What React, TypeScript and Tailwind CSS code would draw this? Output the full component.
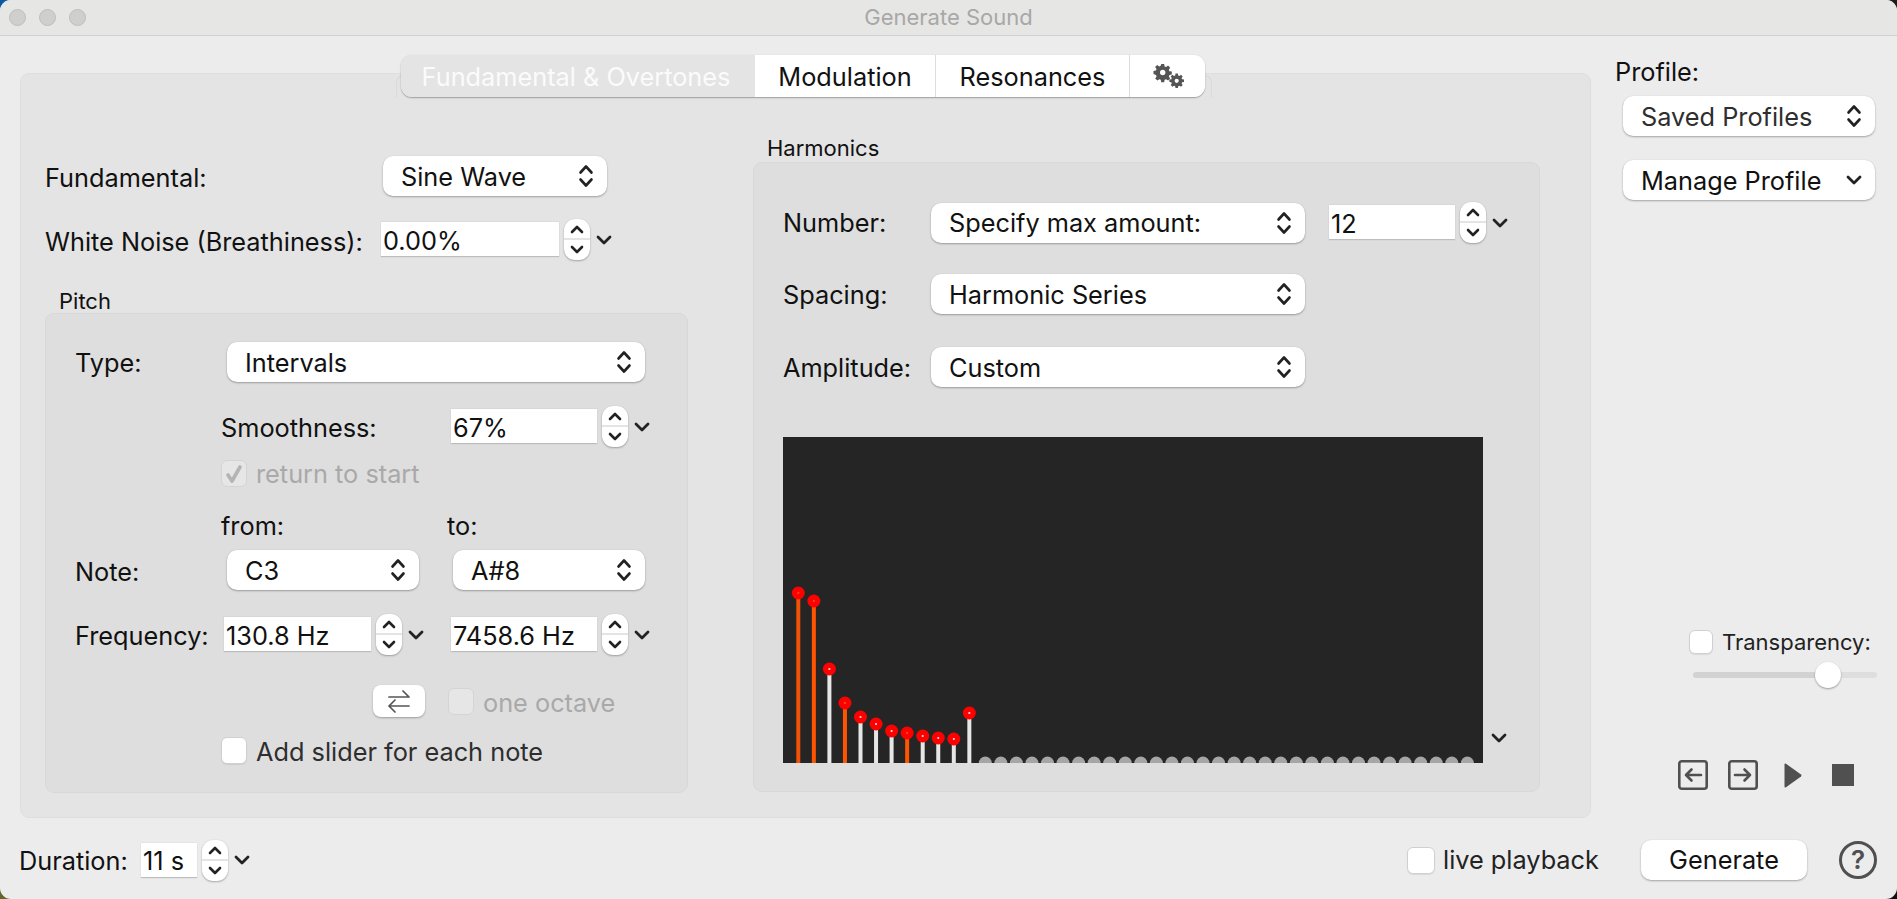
const SF = 'font-["Inter",sans-serif]';

const Updown = () => (
	<svg width="16" height="24" viewBox="0 0 16 24" fill="none" stroke="#222" strokeWidth="2.6" strokeLinecap="round" strokeLinejoin="round">
		<path d="M2.5 8.5 8 2.5l5.5 6" />
		<path d="M2.5 15.5 8 21.5l5.5-6" />
	</svg>
);

const Chevron = () => (
	<svg width="16" height="10" viewBox="0 0 16 10" fill="none" stroke="#222" strokeWidth="2.8" strokeLinecap="round" strokeLinejoin="round">
		<path d="M2 2l6 6 6-6" />
	</svg>
);

function Select({ label, className, pulldown, dim }: { label: string; className: string; pulldown?: boolean; dim?: boolean }) {
	return (
		<div className={`h-[40px] flex items-center justify-between pl-[18px] pr-[13px] bg-white rounded-[10px] shadow-[0_1px_2px_rgba(0,0,0,0.3),0_0_1px_rgba(0,0,0,0.12)] text-[25.3px] leading-none whitespace-nowrap ${dim ? 'text-[#2e2e2e]' : 'text-[#111]'} ${className}`}>
			<span className="pt-[1px]">{label}</span>
			{pulldown ? <Chevron /> : <Updown />}
		</div>
	);
}

function Stepper() {
	return (
		<div className="w-[26px] h-[41px] shrink-0 flex flex-col items-center justify-between py-[6px] bg-white rounded-[11px] shadow-[0_1px_2px_rgba(0,0,0,0.28),0_0_1px_rgba(0,0,0,0.15)] relative">
			<svg width="14" height="9" viewBox="0 0 14 9" fill="none" stroke="#222" strokeWidth="2.6" strokeLinecap="round" strokeLinejoin="round">
				<path d="M2 7l5-5 5 5" />
			</svg>
			<div className="absolute left-0 right-0 top-[19px] h-[2px] bg-[#e4e4e4]" />
			<svg width="14" height="9" viewBox="0 0 14 9" fill="none" stroke="#222" strokeWidth="2.6" strokeLinecap="round" strokeLinejoin="round">
				<path d="M2 2l5 5 5-5" />
			</svg>
		</div>
	);
}

function Spin({ value, inputW, className = '' }: { value: string; inputW: string; className?: string }) {
	return (
		<div className={`flex items-center h-[41px] ${className}`}>
			<div className={`h-[35px] ${inputW} pl-[2px] pt-[3px] flex items-center bg-white border-b border-[#bdbdbd] shadow-[0_0_1px_rgba(0,0,0,0.2)] text-[25.3px] leading-none text-[#111] whitespace-nowrap`}>
				{value}
			</div>
			<div className="ml-[5px]">
				<Stepper />
			</div>
			<div className="ml-[6px]">
				<Chevron />
			</div>
		</div>
	);
}

function Checkbox({ checked, disabled, size = 'w-[26px] h-[27px]' }: { checked?: boolean; disabled?: boolean; size?: string }) {
	return (
		<div className={`${size} shrink-0 rounded-[6px] flex items-center justify-center ${disabled ? 'bg-[#e6e6e6] border border-[#d4d4d4]' : 'bg-white border border-[#d0d0d0] shadow-[0_1px_1px_rgba(0,0,0,0.08)]'}`}>
			{checked && (
				<svg width="18" height="20" viewBox="0 0 18 20" fill="none" stroke="#b4b4b4" strokeWidth="3.6" strokeLinecap="round" strokeLinejoin="round">
					<path d="M3 11l4 6 8-14" />
				</svg>
			)}
		</div>
	);
}

const STICK_X = 15.55;
const harmonics = [
	{ y: 156, c: '#f05208' },
	{ y: 164, c: '#ff5500' },
	{ y: 232, c: '#e6e6e6' },
	{ y: 266, c: '#ff5500' },
	{ y: 280, c: '#e6e6e6' },
	{ y: 287, c: '#e6e6e6' },
	{ y: 294, c: '#e6e6e6' },
	{ y: 296, c: '#ff5500' },
	{ y: 299, c: '#e6e6e6' },
	{ y: 301, c: '#e6e6e6' },
	{ y: 302, c: '#e6e6e6' },
	{ y: 276, c: '#e6e6e6' },
];

function Chart() {
	return (
		<div className="w-[700px] h-[326px] shrink-0 bg-[#252525] overflow-hidden">
			<svg width="700" height="326" viewBox="0 0 700 326">
				{harmonics.map((h, i) => {
					const x = 15.3 + i * STICK_X;
					return (
						<g key={i}>
							<rect x={x - 2} y={h.y} width="4" height={326 - h.y} fill={h.c} />
							<circle cx={x} cy={h.y} r="6.5" fill="#ff0000" />
							<rect x={x - 0.9} y={h.y - 0.9} width="1.8" height="1.8" fill={h.c} />
						</g>
					);
				})}
				{Array.from({ length: 32 }, (_, i) => (
					<circle key={i} cx={202.3 + i * STICK_X} cy="326" r="6.5" fill="#a6a6a9" />
				))}
			</svg>
		</div>
	);
}

function PitchGroup() {
	return (
		<div className="w-[643px] h-[480px] pl-[29px] pt-[28px] rounded-[9px] bg-[#dedede] border border-[#d8d8d8] text-[25.3px] leading-none text-[#111]">
			<div className="flex items-center">
				<span className="w-[152px] pt-[2px]">Type:</span>
				<Select label="Intervals" className="w-[418px]" />
			</div>
			<div className="flex items-center mt-[24px] ml-[146px]">
				<span className="w-[230px] pt-[3px]">Smoothness:</span>
				<Spin value="67%" inputW="w-[146px]" />
			</div>
			<div className="flex items-center mt-[13px] ml-[146px] gap-[9px]">
				<Checkbox checked disabled />
				<span className="text-[#a9a9a9]">return to start</span>
			</div>
			<div className="flex items-center h-[28px] mt-[25px] ml-[146px]">
				<span className="w-[226px]">from:</span>
				<span>to:</span>
			</div>
			<div className="flex items-center mt-[10px]">
				<span className="w-[152px] pt-[4px]">Note:</span>
				<Select label="C3" className="w-[192px]" />
				<Select label="A#8" className="w-[192px] ml-[34px]" />
			</div>
			<div className="flex items-center mt-[24px]">
				<span className="w-[149px] pt-[2px]">Frequency:</span>
				<Spin value="130.8 Hz" inputW="w-[147px]" className="w-[227px]" />
				<Spin value="7458.6 Hz" inputW="w-[146px]" />
			</div>
			<div className="flex items-center mt-[30px] ml-[298px]">
				<div className="w-[52px] h-[32px] bg-white rounded-[8px] flex items-center justify-center shadow-[0_1px_2px_rgba(0,0,0,0.3)]">
					<svg width="22" height="25" viewBox="0 0 22 25" fill="none" stroke="#555" strokeWidth="1.7" strokeLinecap="round" strokeLinejoin="round">
						<path d="M1 8h20M15 2l6 6" />
						<path d="M21 17H1M7 11l-6 6M1 17l6 6" />
					</svg>
				</div>
				<div className="ml-[23px]">
					<Checkbox disabled />
				</div>
				<span className="ml-[9px] pt-[4px] text-[#a9a9a9]">one octave</span>
			</div>
			<div className="flex items-center mt-[20px] ml-[146px] gap-[9px]">
				<Checkbox />
				<span className="pt-[2px] text-[#2e2e2e]">Add slider for each note</span>
			</div>
		</div>
	);
}

function HarmonicsGroup() {
	return (
		<div className="w-[787px] h-[630px] pl-[29px] pt-[39px] rounded-[9px] bg-[#dedede] border border-[#d8d8d8] text-[25.3px] leading-none text-[#111]">
			<div className="flex items-center">
				<span className="w-[148px] pt-[1px]">Number:</span>
				<Select label="Specify max amount:" className="w-[374px]" />
				<Spin value="12" inputW="w-[126px]" className="ml-[24px]" />
			</div>
			<div className="flex items-center mt-[31px]">
				<span className="w-[148px] pt-[2px]">Spacing:</span>
				<Select label="Harmonic Series" className="w-[374px]" />
			</div>
			<div className="flex items-center mt-[33px]">
				<span className="w-[148px] pt-[1px]">Amplitude:</span>
				<Select label="Custom" className="w-[374px]" />
			</div>
			<div className="flex items-end mt-[50px]">
				<Chart />
				<div className="ml-[8px] mb-[20px]">
					<Chevron />
				</div>
			</div>
		</div>
	);
}

function Tabs() {
	const tab = 'h-full flex items-center justify-center bg-white text-[#111] border-l border-[#dcdcdc]';
	return (
		<div className="relative z-10 ml-[381px] w-[804px] h-[42px] flex rounded-[11px] overflow-hidden shadow-[0_1px_1.5px_rgba(0,0,0,0.3),0_0_1px_rgba(0,0,0,0.12)] text-[25.3px] leading-none">
			<div className="w-[354px] h-full flex items-center justify-center pt-[1px] pr-[4px] bg-[#e4e4e4] text-[#fbfbfb]">Fundamental &amp; Overtones</div>
			<div className="w-[180px] h-full flex items-center justify-center pt-[1px] bg-white text-[#111]">Modulation</div>
			<div className={`w-[194px] pt-[1px] ${tab}`}>Resonances</div>
			<div className={`w-[76px] ${tab}`}>
				<svg className="ml-[3px]" width="32" height="26" viewBox="0 0 32 26" fill="#555">
					<path fillRule="evenodd" d="M8.2 1h3l.4 2.4 1.5.6 2-1.400 2.100 2.100-1.400 2 .6 1.500 2.400.4v3l-2.400.4-.6 1.500 1.400 2-2.100 2.100-2-1.400-1.500.6-.4 2.400h-3l-.4-2.400-1.500-.6-2 1.400-2.100-2.100 1.400-2-.6-1.500L.5 11V8l2.400-.4.6-1.500-1.400-2 2.100-2.100 2 1.400 1.500-.6zM9.700 6.800a2.700 2.700 0 100 5.400 2.700 2.700 0 000-5.400z" />
					<path fillRule="evenodd" d="M22.500 10.500h2.400l.3 1.900 1.200.5 1.600-1.100 1.700 1.700-1.100 1.600.5 1.200 1.900.3V19l-1.900.3-.5 1.200 1.100 1.600-1.700 1.700-1.600-1.100-1.200.5-.3 1.900h-2.400l-.3-1.900-1.200-.5-1.600 1.100-1.700-1.700 1.100-1.600-.5-1.200-1.900-.3v-2.400l1.900-.3.5-1.200-1.100-1.600 1.700-1.700 1.600 1.100 1.200-.5zM23.700 15.700a2.100 2.100 0 100 4.200 2.100 2.100 0 000-4.200z" />
				</svg>
			</div>
		</div>
	);
}

function Sidebar() {
	return (
		<div className="flex-1 pl-[24px] pt-[22px] text-[25.3px] leading-none text-[#111]">
			<div className="h-[28px] flex items-center">Profile:</div>
			<Select label="Saved Profiles" dim className="w-[252px] ml-[8px] mt-[10px]" />
			<Select label="Manage Profile" pulldown className="w-[252px] ml-[8px] mt-[24px]" />
			<div className="flex items-center ml-[74px] mt-[430px] gap-[9px]">
				<Checkbox size="w-[24px] h-[24px]" />
				<span className="text-[22px] text-[#222]">Transparency:</span>
			</div>
			<div className="relative w-[184px] h-[26px] ml-[78px] mt-[8px] flex items-center">
				<div className="w-[122px] h-[6px] bg-[#d2d2d2] rounded-l-full" />
				<div className="flex-1 h-[6px] bg-[#dedede] rounded-r-full" />
				<div className="absolute left-[122px] top-0 w-[26px] h-[26px] rounded-full bg-white shadow-[0_1px_2px_rgba(0,0,0,0.35)]" />
			</div>
			<div className="flex items-center ml-[63px] mt-[72px]">
				<svg width="30" height="30" viewBox="0 0 30 30" fill="none" stroke="#505050" strokeWidth="2.600" strokeLinecap="round" strokeLinejoin="round">
					<rect x="1.300" y="1.300" width="27.400" height="27.400" rx="2.500" />
					<path d="M23 15H8M13.500 9.500 8 15l5.500 5.500" />
				</svg>
				<svg className="ml-[20px]" width="30" height="30" viewBox="0 0 30 30" fill="none" stroke="#505050" strokeWidth="2.600" strokeLinecap="round" strokeLinejoin="round">
					<rect x="1.300" y="1.300" width="27.400" height="27.400" rx="2.500" />
					<path d="M7 15h15M16.500 9.500 22 15l-5.500 5.500" />
				</svg>
				<svg className="ml-[26px]" width="18" height="25" viewBox="0 0 18 25" fill="#505050">
					<path d="M0.500 1.500Q0.500 0 2 0.800L17 11.500Q18 12.500 17 13.500L2 24.200Q0.500 25 0.500 23.500Z" />
				</svg>
				<div className="ml-[30px] w-[22px] h-[22px] bg-[#505050]" />
			</div>
		</div>
	);
}

export default function App() {
	return (
		<div className="w-[1897px] h-[899px] bg-[conic-gradient(#1c1c1c_0_25%,#111111_25%_50%,#66652a_50%_75%,#0b5aa0_75%)]">
			<div className={`w-full h-full rounded-[11px] overflow-hidden bg-[#ececec] ${SF}`}>
				<div className="h-[36px] flex items-center bg-[#e6e6e4] border-b border-[#d0d0d0] relative">
					<div className="flex gap-[13px] pl-[9px]">
						<div className="w-[17px] h-[17px] rounded-full bg-[#cfcfcd] border border-[#bdbdbb]" />
						<div className="w-[17px] h-[17px] rounded-full bg-[#cfcfcd] border border-[#bdbdbb]" />
						<div className="w-[17px] h-[17px] rounded-full bg-[#cfcfcd] border border-[#bdbdbb]" />
					</div>
					<span className="absolute inset-x-0 pb-[2px] text-center text-[22px] leading-none text-[#a8a8a8]">Generate Sound</span>
				</div>

				<div className="h-[783px] flex pl-[20px]">
					<div className="w-[1571px] pt-[19px]">
						<Tabs />
						<div className="relative -mt-[24px] h-[745px] flex pl-[24px] pt-[82px] rounded-[9px] bg-[#e4e4e4] border border-[#dedede] text-[25.3px] leading-none text-[#111]">
							<div className="absolute left-[375px] top-[1px] w-[816px] h-[23px] rounded-t-[8px] border-x border-t border-[#dadada]" />
							<div className="w-[642px]">
								<div className="flex items-center">
									<span className="w-[338px] pt-[4px]">Fundamental:</span>
									<Select label="Sine Wave" className="w-[224px]" />
								</div>
								<div className="flex items-center mt-[23px]">
									<span className="w-[336px] pt-[4px]">White Noise (Breathiness):</span>
									<Spin value="0.00%" inputW="w-[178px]" />
								</div>
								<div className="mt-[30px] ml-[14px] h-[23px] pb-[2px] text-[22px] flex items-center">Pitch</div>
								<PitchGroup />
							</div>
							<div className="ml-[66px] -mt-[20px]">
								<div className="ml-[14px] h-[26px] pb-[2px] text-[22px] flex items-center">Harmonics</div>
								<HarmonicsGroup />
							</div>
						</div>
					</div>
					<Sidebar />
				</div>

				<div className="h-[80px] pt-[2px] pl-[19px] pr-[20px] flex items-center text-[25.3px] leading-none text-[#111]">
					<span className="w-[122px] pt-[2px]">Duration:</span>
					<Spin value="11 s" inputW="w-[56px]" />
					<div className="ml-auto flex items-center">
						<Checkbox size="w-[28px] h-[27px]" />
						<span className="ml-[8px] w-[154px] whitespace-nowrap text-[#222]">live playback</span>
						<div className="ml-[44px] w-[166px] h-[40px] flex items-center justify-center bg-white rounded-[10px] shadow-[0_1px_2px_rgba(0,0,0,0.3),0_0_1px_rgba(0,0,0,0.12)]">Generate</div>
						<div className="ml-[32px] w-[38px] h-[38px] rounded-full border-[3px] border-[#505050] flex items-center justify-center text-[26px] font-semibold text-[#505050]">?</div>
					</div>
				</div>
			</div>
		</div>
	);
}
